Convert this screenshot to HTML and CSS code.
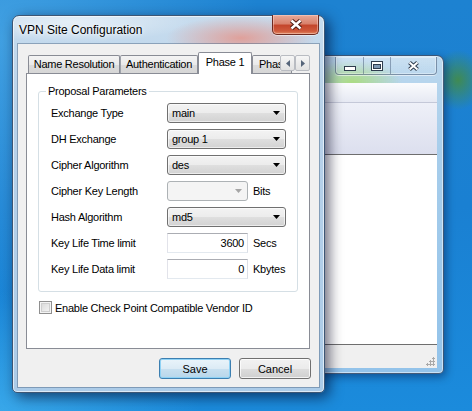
FILE: index.html
```html
<!DOCTYPE html>
<html>
<head>
<meta charset="utf-8">
<title>VPN Site Configuration</title>
<link rel="stylesheet" href="styles.css">
</head>
<body>
<div class="desktop">
  <div class="bgwin">
    <div class="bg-titlebar">
      <div class="caption-btns">
        <span class="cbtn cmin"><svg width="12" height="5" viewBox="0 0 12 5"><rect x="0.5" y="0.5" width="11" height="4" fill="#fff" stroke="#2e3c4e"/></svg></span>
        <span class="cbtn cmax"><svg width="12" height="10" viewBox="0 0 12 10"><rect x="0.5" y="0.5" width="11" height="9" fill="#fff" stroke="#2e3c4e"/><rect x="2.5" y="3.5" width="7" height="4" fill="#7f98b3" stroke="#2e3c4e"/></svg></span>
        <span class="cbtn cclose"><svg width="13" height="10" viewBox="0 0 13 10"><path d="M2.5 1.5L10.5 8.5M10.5 1.5L2.5 8.5" stroke="#2e3c4e" stroke-width="4"/><path d="M2.5 1.5L10.5 8.5M10.5 1.5L2.5 8.5" stroke="#fff" stroke-width="2"/></svg></span>
      </div>
    </div>
    <div class="bg-client">
      <div class="bg-menu"></div>
      <div class="bg-toolbar"></div>
      <div class="bg-list"></div>
      <div class="bg-status"><span class="grip"></span></div>
    </div>
  </div>

  <div class="dialog">
    <div class="titlebar">
      <span class="title">VPN Site Configuration</span>
      <span class="close"><svg width="14" height="11" viewBox="0 0 14 11"><path d="M2.5 1.5L11.5 9.5M11.5 1.5L2.5 9.5" stroke="#4a1a12" stroke-width="4.4"/><path d="M2.5 1.5L11.5 9.5M11.5 1.5L2.5 9.5" stroke="#fff" stroke-width="2.4"/></svg></span>
    </div>
    <div class="client">
      <div class="tabs">
        <div class="tab t-name">Name Resolution</div>
        <div class="tab t-auth">Authentication</div>
        <div class="tab t-ph1 active">Phase 1</div>
        <div class="tab t-ph2">Phase 2</div>
        <div class="tab-scroll">
          <span class="sbtn"><svg width="4" height="7" viewBox="0 0 4 7"><path d="M4 0V7L0 3.5Z" fill="#56657a"/></svg></span>
          <span class="sbtn"><svg width="4" height="7" viewBox="0 0 4 7"><path d="M0 0V7L4 3.5Z" fill="#56657a"/></svg></span>
        </div>
      </div>
      <div class="panel">
        <fieldset class="group">
          <legend>Proposal Parameters</legend>
          <div class="rows">
            <div class="row"><span class="lbl">Exchange Type</span><div class="combo wide"><span>main</span><svg class="arr" width="7" height="4" viewBox="0 0 7 4"><path d="M0 0H7L3.5 4Z"/></svg></div></div>
            <div class="row"><span class="lbl">DH Exchange</span><div class="combo wide"><span>group 1</span><svg class="arr" width="7" height="4" viewBox="0 0 7 4"><path d="M0 0H7L3.5 4Z"/></svg></div></div>
            <div class="row"><span class="lbl">Cipher Algorithm</span><div class="combo wide"><span>des</span><svg class="arr" width="7" height="4" viewBox="0 0 7 4"><path d="M0 0H7L3.5 4Z"/></svg></div></div>
            <div class="row"><span class="lbl">Cipher Key Length</span><div class="combo narrow disabled"><span></span><svg class="arr" width="7" height="4" viewBox="0 0 7 4"><path d="M0 0H7L3.5 4Z"/></svg></div><span class="unit">Bits</span></div>
            <div class="row"><span class="lbl">Hash Algorithm</span><div class="combo wide"><span>md5</span><svg class="arr" width="7" height="4" viewBox="0 0 7 4"><path d="M0 0H7L3.5 4Z"/></svg></div></div>
            <div class="row"><span class="lbl">Key Life Time limit</span><div class="field">3600</div><span class="unit">Secs</span></div>
            <div class="row"><span class="lbl">Key Life Data limit</span><div class="field">0</div><span class="unit">Kbytes</span></div>
          </div>
        </fieldset>
        <div class="check"><span class="box"></span><span>Enable Check Point Compatible Vendor ID</span></div>
      </div>
      <div class="buttons">
        <span class="btn default">Save</span>
        <span class="btn">Cancel</span>
      </div>
    </div>
  </div>
</div>
</body>
</html>
```
FILE: styles.css
```css
html, body {
  margin: 0;
  padding: 0;
}
body {
  font-family: "Liberation Sans", Arial, sans-serif;
  font-size: 11px;
  color: #000;
}
.desktop {
  position: relative;
  width: 472px;
  height: 411px;
  overflow: hidden;
  background:
    radial-gradient(ellipse 26px 30px at 458px 80px, rgba(70,140,60,.85), rgba(70,140,60,0) 100%),
    radial-gradient(ellipse 260px 260px at 0 40px, rgba(95,185,240,.55), rgba(95,185,240,0) 100%),
    radial-gradient(ellipse 200px 120px at 0 411px, rgba(80,190,245,.55), rgba(80,190,245,0) 100%),
    linear-gradient(180deg, #1d82d1 0%, #1a80d2 50%, #1b8bdc 100%);
}

/* ---------- background window ---------- */
.bgwin {
  position: absolute;
  left: 296px;
  top: 55px;
  width: 148px;
  height: 319px;
  box-sizing: border-box;
  border: 1px solid rgba(30,50,80,.75);
  border-radius: 7px 7px 5px 5px;
  padding: 0 6px 5px 6px;
  display: flex;
  flex-direction: column;
  background:
    radial-gradient(ellipse 50px 22px at 55px 26px, rgba(170,220,120,.9), rgba(170,220,120,0) 100%),
    linear-gradient(180deg, #bcd8ee 0%, #a7cdeb 30%, #93c3ea 100%);
  box-shadow: inset 0 0 0 1px rgba(255,255,255,.5), 2px 3px 8px rgba(0,0,40,.4);
}
.bg-titlebar {
  height: 27px;
  position: relative;
}
.caption-btns {
  position: absolute;
  right: 0;
  top: 1px;
  display: flex;
  height: 17px;
  border: 1px solid rgba(60,80,110,.55);
  border-top: 0;
  border-radius: 0 0 4px 4px;
  box-shadow: 0 1px 0 rgba(255,255,255,.55), inset 0 0 0 1px rgba(255,255,255,.35);
  background: linear-gradient(180deg, rgba(255,255,255,.25), rgba(255,255,255,.05));
}
.cbtn {
  display: flex;
  align-items: center;
  justify-content: center;
  box-sizing: border-box;
  height: 17px;
}
.cmin { width: 28px; border-right: 1px solid rgba(60,80,110,.45); padding-top: 5px; }
.cmax { width: 27px; border-right: 1px solid rgba(60,80,110,.45); }
.cclose { width: 45px; }
.bg-client {
  flex: 1;
  display: flex;
  flex-direction: column;
  background: #fff;
}
.bg-menu {
  height: 19px;
  background: linear-gradient(180deg, #fafbfd, #e6e9f3);
  border-bottom: 1px solid #c4c8d8;
}
.bg-toolbar {
  height: 51px;
  background: linear-gradient(180deg, #eef0f8, #dcdfee);
  border-bottom: 1px solid #6e6e6e;
}
.bg-list {
  flex: 1;
  background: #fff;
  border-bottom: 1px solid #6e6e6e;
}
.bg-status {
  height: 23px;
  background: #f0f0f0;
  position: relative;
}
.grip {
  position: absolute;
  right: 2px;
  bottom: 2px;
  width: 9px;
  height: 9px;
  background:
    radial-gradient(circle at 7.5px 1.5px, #a9a9a9 1px, transparent 1.2px),
    radial-gradient(circle at 4.5px 4.5px, #a9a9a9 1px, transparent 1.2px),
    radial-gradient(circle at 7.5px 4.5px, #a9a9a9 1px, transparent 1.2px),
    radial-gradient(circle at 1.5px 7.5px, #a9a9a9 1px, transparent 1.2px),
    radial-gradient(circle at 4.5px 7.5px, #a9a9a9 1px, transparent 1.2px),
    radial-gradient(circle at 7.5px 7.5px, #a9a9a9 1px, transparent 1.2px);
}

/* ---------- dialog ---------- */
.dialog {
  position: absolute;
  left: 12px;
  top: 15px;
  width: 313px;
  height: 378px;
  box-sizing: border-box;
  border: 1px solid #3d5674;
  border-radius: 7px 7px 5px 5px;
  padding: 0 5px 5px 5px;
  display: flex;
  flex-direction: column;
  background:
    radial-gradient(ellipse 75px 22px at 228px 22px, rgba(228,150,140,.85), rgba(228,150,140,0) 100%),
    radial-gradient(ellipse 120px 20px at 60px 6px, rgba(255,255,255,.55), rgba(255,255,255,0) 100%),
    linear-gradient(180deg, #c7dcee 0%, #b8d2ea 25%, #abcbe8 100%);
  box-shadow: inset 0 0 0 1px rgba(255,255,255,.6), 4px 4px 14px rgba(0,0,30,.6);
}
.titlebar {
  height: 28px;
  flex: none;
  display: flex;
  align-items: center;
  position: relative;
}
.title {
  padding-left: 1px;
  padding-bottom: 1px;
  font-size: 12px;
  color: #000;
  text-shadow: 0 0 6px rgba(255,255,255,.9), 0 0 3px rgba(255,255,255,.9);
}
.close {
  position: absolute;
  right: 0;
  top: -1px;
  width: 47px;
  height: 20px;
  box-sizing: border-box;
  border: 1px solid #6e2a20;
  border-top: 0;
  border-radius: 0 0 5px 5px;
  display: flex;
  align-items: center;
  justify-content: center;
  background: linear-gradient(180deg, #e7a998 0%, #d9826d 45%, #c4462c 55%, #cf5a3c 85%, #e08a64 100%);
  box-shadow: inset 0 0 0 1px rgba(255,220,210,.45), 0 1px 0 rgba(255,255,255,.5);
}
.client {
  flex: 1;
  box-sizing: border-box;
  background: #f0f0f0;
  outline: 1px solid rgba(70,95,125,.45);
  padding: 8px 9px 8px 8px;
  display: flex;
  flex-direction: column;
  letter-spacing: -0.25px;
}

/* tabs */
.tabs {
  height: 21px;
  flex: none;
  display: flex;
  align-items: flex-end;
  padding-left: 2px;
  position: relative;
  z-index: 1;
}
.tab {
  box-sizing: border-box;
  height: 18px;
  border: 1px solid #898c95;
  border-bottom: 0;
  border-radius: 2px 2px 0 0;
  background: linear-gradient(180deg, #f4f4f4 0%, #eaeaea 50%, #dcdcdc 51%, #d6d6d6 100%);
  display: flex;
  align-items: center;
  justify-content: center;
  padding-bottom: 1px;
  white-space: nowrap;
  overflow: hidden;
}
.t-name { width: 92px; }
.t-auth { width: 78px; border-left-color: #9ea2aa; }
.t-ph1 { width: 54px; }
.t-ph2 { width: 40px; margin-left: 0; justify-content: flex-start; padding-left: 6px; }
.tab.active {
  height: 22px;
  margin-bottom: -1px;
  background: #fff;
  padding-bottom: 4px;
}
.tab-scroll {
  position: absolute;
  left: 254px;
  top: 3px;
  display: flex;
  background: #f0f0f0;
}
.sbtn {
  width: 15px;
  height: 16px;
  box-sizing: border-box;
  border: 1px solid #b9bcc2;
  border-radius: 2px;
  background: linear-gradient(180deg, #f6f6f6, #e2e2e2);
  display: flex;
  align-items: center;
  justify-content: center;
}

/* panel */
.panel {
  height: 276px;
  flex: none;
  box-sizing: border-box;
  border: 1px solid #898c95;
  background: #fff;
  padding: 11px 11px 0 11px;
}
.group {
  margin: 0;
  padding: 0;
  border: 1px solid #d5dfe5;
  border-radius: 3px;
}
.group legend {
  margin-left: 7px;
  padding: 0 2px;
  line-height: 13px;
}
.rows {
  padding: 5px 0 12px 12px;
  display: flex;
  flex-direction: column;
  gap: 6px;
}
.row {
  height: 20px;
  display: flex;
  align-items: center;
}
.lbl {
  width: 116px;
  flex: none;
}
.combo {
  box-sizing: border-box;
  height: 20px;
  border: 1px solid #707070;
  border-radius: 3px;
  background: linear-gradient(180deg, #f3f3f3 0%, #ececec 50%, #dfdfdf 51%, #d2d2d2 100%);
  box-shadow: inset 0 0 0 1px rgba(255,255,255,.6);
  display: flex;
  align-items: center;
  justify-content: space-between;
  padding: 0 5px 0 4px;
}
.combo.wide { width: 119px; }
.combo.narrow { width: 81px; }
.combo .arr { fill: #000; }
.combo.disabled {
  background: #f4f4f4;
  border-color: #adb2b5;
  box-shadow: none;
}
.combo.disabled .arr { fill: #a5a5a5; }
.field {
  box-sizing: border-box;
  width: 81px;
  height: 20px;
  border: 1px solid;
  border-color: #abadb3 #dbdfe6 #e3e9ef #e2e3ea;
  background: #fff;
  text-align: right;
  padding-right: 3px;
  line-height: 18px;
}
.unit {
  margin-left: 5px;
}
.check {
  margin: 9px 0 0 1px;
  display: flex;
  align-items: center;
  gap: 3px;
  height: 13px;
}
.box {
  width: 13px;
  height: 13px;
  box-sizing: border-box;
  border: 1px solid #8f8f8f;
  background: linear-gradient(135deg, #d6d6d6, #f8f8f8);
  box-shadow: inset 0 0 0 1px #f4f4f4, inset 0 0 0 2px #cfcfcf;
}

/* buttons */
.buttons {
  margin-top: 9px;
  margin-right: -1px;
  display: flex;
  justify-content: flex-end;
  gap: 8px;
}
.btn {
  box-sizing: border-box;
  width: 72px;
  height: 21px;
  border: 1px solid #707070;
  border-radius: 3px;
  background: linear-gradient(180deg, #f2f2f2 0%, #ebebeb 50%, #dddddd 51%, #cfcfcf 100%);
  box-shadow: inset 0 0 0 1px rgba(255,255,255,.75);
  display: flex;
  align-items: center;
  justify-content: center;
  letter-spacing: 0;
}
.btn.default {
  border-color: #3c7fb1;
  background: linear-gradient(180deg, #eaf4fa 0%, #dcebf5 50%, #c8e0f0 51%, #b8d6ea 100%);
  box-shadow: inset 0 0 0 1px #8fd2f5;
}
```
